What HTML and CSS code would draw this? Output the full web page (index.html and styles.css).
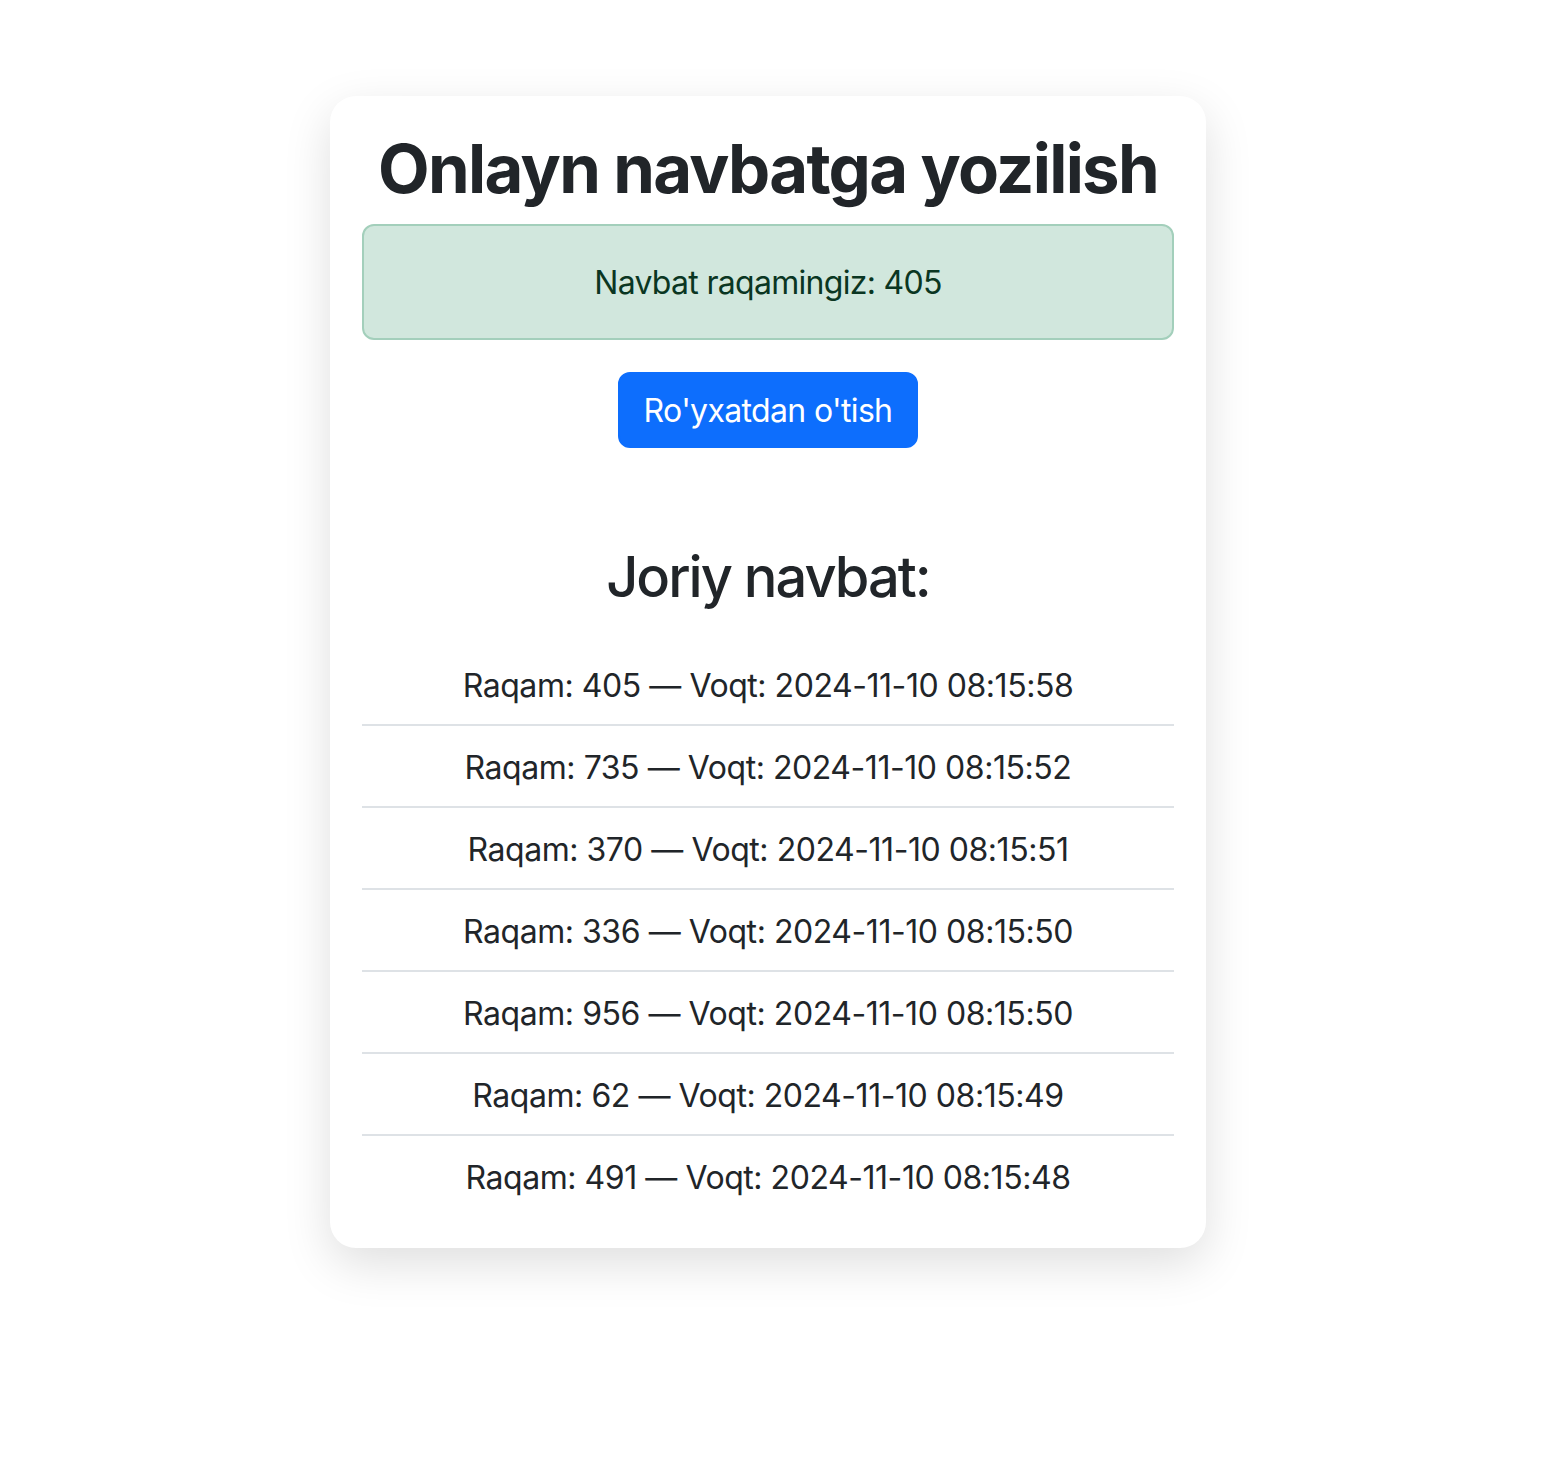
FILE: index.html
```html
<!DOCTYPE html>
<html lang="uz">
<head>
<meta charset="utf-8">
<title>Onlayn navbatga yozilish</title>
<link rel="stylesheet" href="styles.css">
</head>
<body>
<div class="page">
  <main class="card">
    <h1 class="title">Onlayn navbatga yozilish</h1>
    <div class="alert">Navbat raqamingiz: 405</div>
    <div class="actions">
      <button class="btn" type="button">Ro'yxatdan o'tish</button>
    </div>
    <section class="queue">
      <h2 class="queue-title">Joriy navbat:</h2>
      <ul class="list">
        <li class="item">Raqam: 405 — Voqt: 2024-11-10 08:15:58</li>
        <li class="item">Raqam: 735 — Voqt: 2024-11-10 08:15:52</li>
        <li class="item">Raqam: 370 — Voqt: 2024-11-10 08:15:51</li>
        <li class="item">Raqam: 336 — Voqt: 2024-11-10 08:15:50</li>
        <li class="item">Raqam: 956 — Voqt: 2024-11-10 08:15:50</li>
        <li class="item">Raqam: 62 — Voqt: 2024-11-10 08:15:49</li>
        <li class="item">Raqam: 491 — Voqt: 2024-11-10 08:15:48</li>
      </ul>
    </section>
  </main>
</div>
</body>
</html>
```

FILE: styles.css
```css
* { box-sizing: border-box; }
html, body { margin: 0; padding: 0; background: #ffffff; }
body {
  font-family: Inter, "Noto Sans", "Liberation Sans", sans-serif;
  color: #212529;
  font-size: 32px;
  line-height: 48px;
}
.page {
  width: 1536px;
  padding-top: 96px;
  padding-bottom: 224px;
  display: flex;
  justify-content: center;
}
.card {
  width: 876px;
  background: #fff;
  border-radius: 26px;
  padding: 32px;
  box-shadow: 0 16px 48px rgba(0, 0, 0, 0.13);
  text-align: center;
}
.title {
  margin: 0 0 15px;
  font-size: 67px;
  line-height: 81px;
  font-weight: 700;
  letter-spacing: -1.7px;
  color: #212529;
}
.alert {
  background: #d1e7dd;
  border: 2px solid #a3cfbb;
  color: #0a3622;
  border-radius: 12px;
  padding: 33px 32px 31px;
  margin-bottom: 32px;
  letter-spacing: -0.7px;
}
.actions { display: flex; justify-content: center; }
.btn {
  font-family: inherit;
  font-size: 32px;
  line-height: 48px;
  letter-spacing: -0.65px;
  color: #fff;
  background: #0d6efd;
  border: 2px solid #0d6efd;
  border-radius: 12px;
  padding: 13px 24px 11px;
  cursor: pointer;
}
.queue { margin-top: 96px; }
.queue-title {
  margin: 0 0 33px;
  font-size: 56px;
  line-height: 67px;
  font-weight: 500;
  letter-spacing: -2px;
}
.list {
  list-style: none;
  margin: 0;
  padding: 0;
}
.item {
  padding: 18px 32px 14px;
  border-bottom: 2px solid #dee2e6;
  line-height: 48px;
  height: 82px;
  letter-spacing: -0.45px;
}
.item:last-child { border-bottom: 0; height: 80px; }
```
